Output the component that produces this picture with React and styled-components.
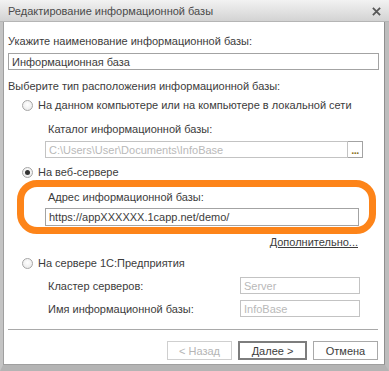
import React from "react";
import styled, { createGlobalStyle } from "styled-components";

const Global = createGlobalStyle`
  html, body {
    margin: 0;
    padding: 0;
    background: #d6d6d6;
  }
  body {
    font-family: "Liberation Sans", Arial, sans-serif;
    font-size: 11px;
    color: #3c3c3c;
  }
`;

function Radio({ checked, label }) {
  return (
    <RadioRow>
      <RadioCircle checked={checked} />
      <span>{label}</span>
    </RadioRow>
  );
}

export default function App() {
  return (
    <>
      <Global />
      <Window>
        <TitleBar>
          <span>Редактирование информационной базы</span>
          <CloseIcon viewBox="0 0 10 10">
            <path d="M1 1 L9 9 M9 1 L1 9" stroke="#575757" strokeWidth="2" />
          </CloseIcon>
        </TitleBar>
        <Body>
          <Label $top={12}>Укажите наименование информационной базы:</Label>
          <Field $top={5}>Информационная база</Field>
          <Label $top={9}>Выберите тип расположения информационной базы:</Label>

          <Section $top={5}>
            <Radio label="На данном компьютере или на компьютере в локальной сети" />
          </Section>
          <Indent>
            <SubLabel $top={10}>Каталог информационной базы:</SubLabel>
            <FieldGroup $top={5}>
              <Field disabled $flex>C:\Users\User\Documents\InfoBase</Field>
              <DotsButton>...</DotsButton>
            </FieldGroup>
          </Indent>

          <Section $top={7}>
            <Radio checked label="На веб-сервере" />
          </Section>
          <Highlight>
            <SubLabel>Адрес информационной базы:</SubLabel>
            <Field $top={4} $h={18}>https://appXXXXXX.1capp.net/demo/</Field>
          </Highlight>
          <LinkRow>
            <MoreLink>Дополнительно...</MoreLink>
          </LinkRow>

          <Section $top={7}>
            <Radio label="На сервере 1С:Предприятия" />
          </Section>
          <ServerGrid>
            <SubLabel>Кластер серверов:</SubLabel>
            <Field disabled>Server</Field>
            <SubLabel>Имя информационной базы:</SubLabel>
            <Field disabled>InfoBase</Field>
          </ServerGrid>

          <Separator />
          <Buttons>
            <Button disabled>&lt; Назад</Button>
            <Button $default>Далее &gt;</Button>
            <Button>Отмена</Button>
          </Buttons>
        </Body>
      </Window>
    </>
  );
}

const Window = styled.div`
  width: 389px;
  height: 371px;
  box-sizing: border-box;
  display: flex;
  flex-direction: column;
  background: #c9c9c9;
  border-left: 3px solid #c4c4c4;
  border-right: 4px solid #bdbdbd;
  border-bottom: 6px solid #b4b4b4;
`;

const TitleBar = styled.div`
  height: 22px;
  margin-left: -3px;
  margin-right: -4px;
  padding: 1px 8px 0 8px;
  box-sizing: border-box;
  display: flex;
  align-items: center;
  justify-content: space-between;
  background: linear-gradient(#f2f2f2 0%, #e6e6e6 40%, #d3d3d3 100%);
  border-bottom: 1px solid #b5b5b5;
  font-size: 11px;
  color: #4a4a4a;
`;

const CloseIcon = styled.svg`
  width: 9px;
  height: 9px;
`;

const Body = styled.div`
  flex: 1;
  background: #fff;
  border-left: 1px solid #9f9f9f;
  border-right: 1px solid #8f8f8f;
  border-bottom: 1px solid #9f9f9f;
  padding: 0 5px 0 4px;
  display: flex;
  flex-direction: column;
`;

const Label = styled.div`
  margin-top: ${(p) => p.$top || 0}px;
  line-height: 14px;
  white-space: nowrap;
`;

const SubLabel = styled.div`
  margin-top: ${(p) => p.$top || 0}px;
  padding-left: 3px;
  line-height: 14px;
  white-space: nowrap;
`;

const Field = styled.div`
  margin-top: ${(p) => p.$top || 0}px;
  height: ${(p) => p.$h || 17}px;
  flex: ${(p) => (p.$flex ? 1 : "none")};
  box-sizing: border-box;
  border: 1px solid ${(p) => (p.disabled ? "#c3c3c3" : "#a3a3a3")};
  padding-left: 3px;
  display: flex;
  align-items: center;
  color: ${(p) => (p.disabled ? "#b9b9b9" : "#3c3c3c")};
  white-space: nowrap;
  overflow: hidden;
`;

const Section = styled.div`
  margin-top: ${(p) => p.$top || 0}px;
  padding-left: 14px;
`;

const RadioRow = styled.div`
  display: flex;
  align-items: center;
  gap: 5px;
  height: 14px;
  white-space: nowrap;
`;

const RadioCircle = styled.span`
  width: 11px;
  height: 11px;
  box-sizing: border-box;
  border-radius: 50%;
  border: 1px solid #a6a6a6;
  background: radial-gradient(circle at 50% 40%, #ffffff 0%, #f0f0f0 60%, #e2e2e2 100%);
  display: flex;
  align-items: center;
  justify-content: center;
  &::after {
    content: "";
    width: 5px;
    height: 5px;
    border-radius: 50%;
    background: #333;
    display: ${(p) => (p.checked ? "block" : "none")};
  }
`;

const Indent = styled.div`
  padding-left: 37px;
  padding-right: 16px;
`;

const FieldGroup = styled.div`
  margin-top: ${(p) => p.$top || 0}px;
  display: flex;
`;

const DotsButton = styled.div`
  width: 15px;
  height: 17px;
  box-sizing: border-box;
  border: 1px solid #a3a3a3;
  border-left: none;
  display: flex;
  align-items: flex-end;
  justify-content: center;
  padding-bottom: 3px;
  color: #8a7424;
  font-weight: bold;
  font-size: 11px;
  line-height: 8px;
  letter-spacing: -0.5px;
`;

const Highlight = styled.div`
  margin: 1px 3px 0 9px;
  height: 54px;
  box-sizing: border-box;
  border: 7px solid #fd8419;
  border-radius: 20px;
  padding: 3px 10px 0 21px;
`;

const LinkRow = styled.div`
  margin-top: 1px;
  display: flex;
  justify-content: flex-end;
  padding-right: 21px;
`;

const MoreLink = styled.span`
  line-height: 14px;
  text-decoration: underline;
  color: #3c3c3c;
`;

const ServerGrid = styled.div`
  margin-top: 7px;
  padding-left: 37px;
  display: grid;
  grid-template-columns: 1fr 120px;
  row-gap: 6px;
  align-items: center;
  padding-right: 19px;
`;

const Separator = styled.div`
  margin-top: 12px;
  margin-right: 1px;
  height: 1px;
  background: #a9a9a9;
`;

const Buttons = styled.div`
  margin-top: 11px;
  display: flex;
  justify-content: flex-end;
  gap: 6px;
  padding-right: 1px;
`;

const Button = styled.div`
  width: ${(p) => (p.$default ? 69 : 65)}px;
  height: 19px;
  box-sizing: border-box;
  border: ${(p) => (p.$default ? "2px solid #8a8a8a" : "1px solid #a9a9a9")};
  border-color: ${(p) => (p.disabled ? "#cfcfcf" : p.$default ? "#7d7d7d" : "#a9a9a9")};
  display: flex;
  align-items: center;
  justify-content: center;
  color: ${(p) => (p.disabled ? "#b5b5b5" : "#3c3c3c")};
  background: #fff;
`;
